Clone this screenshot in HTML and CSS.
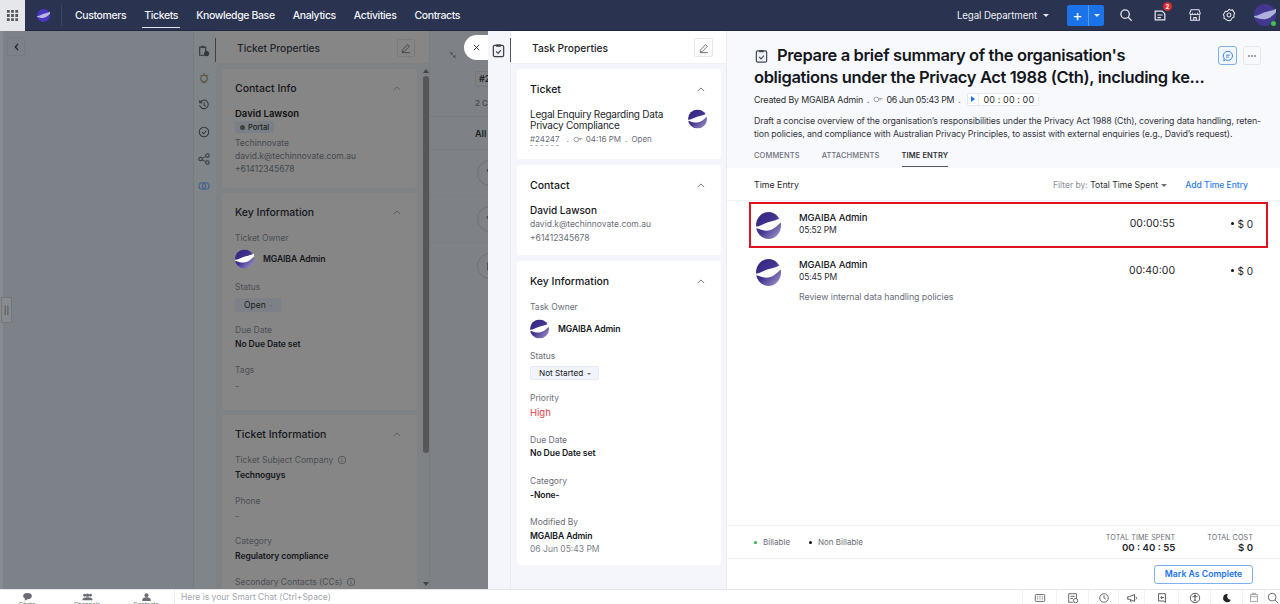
FILE: index.html
```html
<!DOCTYPE html>
<html lang="en">
<head>
<meta charset="utf-8">
<title>Task Properties</title>
<link rel="stylesheet" href="styles.css">
</head>
<body>
<svg class="defs" width="0" height="0" aria-hidden="true">
  <defs>
    <linearGradient id="lg" x1="0.1" y1="0" x2="0.95" y2="0.85">
      <stop offset="0" stop-color="#33257f"/>
      <stop offset=".5" stop-color="#41338e"/>
      <stop offset="1" stop-color="#9a8bc6"/>
    </linearGradient>
    <symbol id="logo" viewBox="0 0 24 24">
      <circle cx="12" cy="12" r="12" fill="url(#lg)"/>
      <path d="M-1 12.500C2 14 5 11.500 9 10C14 8 19 8 25 4.500L25 8C21 12 17 16 12 16.500C7 17 3 15 -1 14z" fill="#fff"/>
    </symbol>
    <symbol id="clip" viewBox="0 0 16 16">
      <rect x="2.500" y="2.500" width="11" height="12" rx="1.500" fill="#eef0f8" stroke="currentColor" stroke-width="1.300"/>
      <path d="M5.500 1.500h5v2.500h-5z" fill="currentColor"/>
      <path d="M5.500 9l2 2 3-3.500" fill="none" stroke="currentColor" stroke-width="1.200"/>
    </symbol>
    <symbol id="pen" viewBox="0 0 16 16">
      <path d="M3 11l7-7.500 2.500 2.300-7 7.200H3zM2.500 14.200h11" fill="none" stroke="currentColor" stroke-width="1"/>
    </symbol>
    <symbol id="chev" viewBox="0 0 10 6">
      <path d="M1 5l4-4 4 4" fill="none" stroke="currentColor" stroke-width="1"/>
    </symbol>
    <symbol id="info" viewBox="0 0 12 12">
      <circle cx="6" cy="6" r="4.500" fill="none" stroke="currentColor"/>
      <path d="M6 5.500v3M6 3.500v1" stroke="currentColor"/>
    </symbol>
    <symbol id="clock" viewBox="0 0 12 8">
      <circle cx="4" cy="4" r="2.800" fill="none" stroke="currentColor"/>
      <path d="M7 3h4.500M8.500 3v2" stroke="currentColor"/>
    </symbol>
  </defs>
</svg>

<div class="app">
  <header class="topbar">
    <button class="grid-btn" aria-label="Apps">
      <svg class="ic16" viewBox="0 0 14 14"><path d="M1 1h3v3H1zM5.500 1h3v3h-3zM10 1h3v3h-3zM1 5.500h3v3H1zM5.500 5.500h3v3h-3zM10 5.500h3v3h-3zM1 10h3v3H1zM5.500 10h3v3h-3zM10 10h3v3h-3z" fill="#55585f"/></svg>
    </button>
    <div class="brand">
      <svg class="brand-logo" viewBox="0 0 24 24"><circle cx="12" cy="12" r="12" fill="#4a35c0"/><path d="M-1 12.500C2 14 5 11.500 9 10C14 8 19 8 25 4.500L25 8C21 12 17 16 12 16.500C7 17 3 15 -1 14z" fill="#b9b6e0"/></svg>
    </div>
    <nav class="nav">
      <a class="nav-item">Customers</a>
      <a class="nav-item nav-active">Tickets</a>
      <a class="nav-item">Knowledge Base</a>
      <a class="nav-item">Analytics</a>
      <a class="nav-item">Activities</a>
      <a class="nav-item">Contracts</a>
    </nav>
    <div class="top-right">
      <span class="dept">Legal Department</span>
      <span class="caret-w"></span>
      <div class="add-btn">
        <span class="add-plus">+</span>
        <span class="add-drop"><span class="caret-w"></span></span>
      </div>
      <svg class="top-ic ti-search" viewBox="0 0 16 16"><circle cx="7" cy="7" r="4.800" fill="none" stroke="#e8e8ee" stroke-width="1.500"/><path d="M10.500 10.500l4 4" stroke="#e8e8ee" stroke-width="1.500"/></svg>
      <span class="note-wrap">
        <svg class="top-ic" viewBox="0 0 16 16"><path d="M2.500 3.500h8l3 3v7h-11z" fill="none" stroke="#e8e8ee" stroke-width="1.400"/><path d="M5 8h6M5 11h4" stroke="#e8e8ee" stroke-width="1.200"/></svg>
        <span class="badge">2</span>
      </span>
      <svg class="top-ic ti-store" viewBox="0 0 16 16"><path d="M2 6l1.500-4h9L14 6c0 2-2.500 2-3 .5C10.500 8 9 8 8 6.500 7 8 5.500 8 5 6.500 4.500 8 2 8 2 6zM3 8.500V14h10V8.500M6.500 14v-3h3v3" fill="none" stroke="#e8e8ee" stroke-width="1.200"/></svg>
      <svg class="top-ic" viewBox="0 0 16 16"><path d="M8 1.500l2 1 2.200-.3 1 2 1.300 1.800-1 2 .3 2.200-2 1L10 14l-2 .6-2-.6-1.800-1.300-2-1 .3-2.200-1-2 1.300-1.800 1-2 2.200.3z" fill="none" stroke="#e8e8ee" stroke-width="1.200"/><circle cx="8" cy="8" r="2.200" fill="none" stroke="#e8e8ee" stroke-width="1.200"/></svg>
      <span class="avatar-wrap">
        <svg class="avatar" viewBox="0 0 24 24"><circle cx="12" cy="12" r="12" fill="#43388f"/><path d="M-1 12.500C2 14 5 11.500 9 10C14 8 19 8 25 4.500L25 8C21 12 17 16 12 16.500C7 17 3 15 -1 14z" fill="#aeb0dc"/></svg>
        <span class="online"></span>
      </span>
    </div>
  </header>

  <main class="main">
    <section class="dim">
      <div class="dim-rail"></div>
      <div class="dim-collapsed">
        <span class="back-btn"><svg viewBox="0 0 6 10" class="back-ic"><path d="M5 1L1.500 5 5 9" fill="none" stroke="#222" stroke-width="1.500"/></svg></span>
        <span class="handle">||</span>
      </div>

      <aside class="dim-side">
        <span class="ds-item ds-first"><svg class="ds-ic" viewBox="0 0 14 14"><path d="M2 2.500h7v9.500H2z" fill="none" stroke="#33373c" stroke-width="1.300"/><path d="M4 1h3v2H4z" fill="#33373c"/><circle cx="10" cy="10" r="3" fill="#33373c"/></svg></span>
        <span class="ds-item"><svg class="ds-ic" viewBox="0 0 14 14"><circle cx="7" cy="7.500" r="3.800" fill="none" stroke="#55523a" stroke-width="1.300"/><path d="M7 1v2M2 3l1.500 1.500M12 3l-1.500 1.500M5 12.500h4" stroke="#55523a"/></svg></span>
        <span class="ds-item"><svg class="ds-ic" viewBox="0 0 14 14"><path d="M2.500 4A5 5 0 1 1 2 7M2 1.500V4.500h3M7 4v3.300l2 1" fill="none" stroke="#33373c" stroke-width="1.200"/></svg></span>
        <span class="ds-item"><svg class="ds-ic" viewBox="0 0 14 14"><circle cx="7" cy="7" r="5.500" fill="none" stroke="#33373c" stroke-width="1.200"/><path d="M4.500 7l2 2 3-3.500" fill="none" stroke="#33373c" stroke-width="1.200"/></svg></span>
        <span class="ds-item"><svg class="ds-ic" viewBox="0 0 14 14"><circle cx="3" cy="7" r="2" fill="none" stroke="#33373c" stroke-width="1.200"/><circle cx="11" cy="3" r="2" fill="none" stroke="#33373c" stroke-width="1.200"/><circle cx="11" cy="11" r="2" fill="none" stroke="#33373c" stroke-width="1.200"/><path d="M5 6l4-2M5 8l4 2" stroke="#33373c"/></svg></span>
        <span class="ds-item"><svg class="ds-ic" viewBox="0 0 14 14"><circle cx="5" cy="7" r="3.800" fill="none" stroke="#45608f" stroke-width="1.400"/><circle cx="9" cy="7" r="3.800" fill="none" stroke="#45608f" stroke-width="1.400"/></svg></span>
      </aside>

      <div class="dim-panel">
        <div class="dp-head">
          <span class="dp-title">Ticket Properties</span>
          <span class="dp-edit"><svg class="ic12" viewBox="0 0 16 16"><use href="#pen"/></svg></span>
        </div>
        <div class="dp-body">
          <div class="dp-cards">
            <div class="dcard dcard-contact">
              <div class="card-head"><span class="card-title">Contact Info</span><svg class="chev" viewBox="0 0 10 6"><use href="#chev"/></svg></div>
              <div class="d-name">David Lawson</div>
              <span class="portal"><span class="portal-dot"></span>Portal</span>
              <div class="d-line">Techinnovate</div>
              <div class="d-line">david.k@techinnovate.com.au</div>
              <div class="d-line">+61412345678</div>
            </div>
            <div class="dcard dcard-key">
              <div class="card-head"><span class="card-title">Key Information</span><svg class="chev" viewBox="0 0 10 6"><use href="#chev"/></svg></div>
              <div class="d-label d-label-first">Ticket Owner</div>
              <div class="owner d-owner"><svg class="logo-s" viewBox="0 0 24 24"><use href="#logo"/></svg><span class="d-strong">MGAIBA Admin</span></div>
              <div class="d-label d-status">Status</div>
              <span class="d-chip">Open <span class="mini-caret"></span></span>
              <div class="d-label d-due">Due Date</div>
              <div class="d-strong">No Due Date set</div>
              <div class="d-label d-tags">Tags</div>
              <div class="d-dash">-</div>
            </div>
            <div class="dcard dcard-info">
              <div class="card-head"><span class="card-title">Ticket Information</span><svg class="chev" viewBox="0 0 10 6"><use href="#chev"/></svg></div>
              <div class="d-label d-label-first">Ticket Subject Company <svg class="ic-info" viewBox="0 0 12 12"><use href="#info"/></svg></div>
              <div class="d-strong d-company">Technoguys</div>
              <div class="d-label d-gap2">Phone</div>
              <div class="d-dash d-dash-t">-</div>
              <div class="d-label d-gap2">Category</div>
              <div class="d-strong d-reg">Regulatory compliance</div>
              <div class="d-label d-gap2">Secondary Contacts (CCs) <svg class="ic-info" viewBox="0 0 12 12"><use href="#info"/></svg></div>
            </div>
          </div>
          <div class="d-scroll">
            <span class="arrow-up"></span>
            <span class="thumb"></span>
            <span class="arrow-down"></span>
          </div>
        </div>
      </div>

      <div class="dim-content">
        <svg class="collapse-ic" viewBox="0 0 10 10"><path d="M1 1l3 3M9 9L6 6M4 2v2H2M6 8V6h2" fill="none" stroke="#3b3e42"/></svg>
        <span class="dc-chip">#2</span>
        <div class="dc-count">2 C</div>
        <div class="dc-all">All</div>
        <div class="dc-row"><span class="dc-circle"><svg class="dc-ic" viewBox="0 0 10 10"><path d="M1 2h8L5 9z" fill="none" stroke="#33373c"/></svg></span></div>
        <div class="dc-row"><span class="dc-circle"><svg class="dc-ic" viewBox="0 0 10 10"><path d="M1 2h8L5 9z" fill="none" stroke="#33373c"/></svg></span></div>
        <div class="dc-row dc-row-last"><span class="dc-circle"><svg class="dc-ic" viewBox="0 0 10 10"><rect x="2" y="1" width="6" height="8" fill="none" stroke="#33373c"/></svg></span></div>
      </div>
      <button class="close-pill" aria-label="Close"><svg class="close-ic" viewBox="0 0 8 8"><path d="M1 1l6 6M7 1L1 7" stroke="#222" stroke-width="1"/></svg></button>
    </section>

    <aside class="strip">
      <span class="strip-item"><svg class="ic14" viewBox="0 0 16 16"><use href="#clip"/></svg></span>
    </aside>

    <section class="props">
      <div class="props-head">
        <span class="props-title">Task Properties</span>
        <span class="edit-btn"><svg class="ic12" viewBox="0 0 16 16"><use href="#pen"/></svg></span>
      </div>
      <div class="props-body">
        <div class="card card-ticket">
          <div class="pcard-head"><span class="card-title">Ticket</span><svg class="chev" viewBox="0 0 10 6"><use href="#chev"/></svg></div>
          <div class="ticket-row">
            <div class="ticket-text">
              <div class="ticket-name">Legal Enquiry Regarding Data<br>Privacy Compliance</div>
              <div class="ticket-meta"><span class="ticket-no">#24247</span><span class="sep">.</span><svg class="ic-clock" viewBox="0 0 12 8"><use href="#clock"/></svg><span>04:16 PM</span><span class="sep">.</span><span>Open</span></div>
            </div>
            <svg class="logo-m" viewBox="0 0 24 24"><use href="#logo"/></svg>
          </div>
        </div>
        <div class="card card-contact">
          <div class="pcard-head"><span class="card-title">Contact</span><svg class="chev" viewBox="0 0 10 6"><use href="#chev"/></svg></div>
          <div class="p-name">David Lawson</div>
          <div class="p-line">david.k@techinnovate.com.au</div>
          <div class="p-line">+61412345678</div>
        </div>
        <div class="card card-key">
          <div class="pcard-head"><span class="card-title">Key Information</span><svg class="chev" viewBox="0 0 10 6"><use href="#chev"/></svg></div>
          <div class="p-label p-first">Task Owner</div>
          <div class="owner p-owner"><svg class="logo-s" viewBox="0 0 24 24"><use href="#logo"/></svg><span class="p-strong">MGAIBA Admin</span></div>
          <div class="p-label p-status">Status</div>
          <span class="p-chip">Not Started <span class="mini-caret"></span></span>
          <div class="p-label p-priority">Priority</div>
          <div class="p-high">High</div>
          <div class="p-label p-due">Due Date</div>
          <div class="p-strong p-dueval">No Due Date set</div>
          <div class="p-label p-cat">Category</div>
          <div class="p-strong p-none">-None-</div>
          <div class="p-label p-mod">Modified By</div>
          <div class="p-strong">MGAIBA Admin</div>
          <div class="p-date">06 Jun 05:43 PM</div>
        </div>
      </div>
    </section>

    <section class="detail">
      <div class="detail-head">
        <div class="title-row">
          <h1 class="title"><svg class="title-ic" viewBox="0 0 16 16"><use href="#clip"/></svg>Prepare a brief summary of the organisation's<br>obligations under the Privacy Act 1988 (Cth), including ke...</h1>
          <div class="title-actions">
            <span class="chat-btn"><svg class="ic12" viewBox="0 0 14 14"><path d="M7 1.500a5.300 5.300 0 1 1-2.500 10L2 12.500l.6-2.500A5.300 5.300 0 0 1 7 1.500zM4.800 6h4.400M4.800 8.300h3" fill="none" stroke="#2b7be4" stroke-width="1.100"/></svg></span>
            <span class="more-btn"><span class="dot3"></span><span class="dot3"></span><span class="dot3"></span></span>
          </div>
        </div>
        <div class="meta">
          <span>Created By MGAIBA Admin</span><span class="sep">.</span>
          <svg class="ic-clock" viewBox="0 0 12 8"><use href="#clock"/></svg>
          <span class="meta-date">06 Jun 05:43 PM</span><span class="sep">.</span>
          <span class="timer"><span class="play-box"><span class="play"></span></span><span class="timer-val">00 : 00 : 00</span></span>
        </div>
        <p class="desc">Draft a concise overview of the organisation’s responsibilities under the Privacy Act 1988 (Cth), covering data handling, reten-<br>tion policies, and compliance with Australian Privacy Principles, to assist with external enquiries (e.g., David’s request).</p>
        <div class="tabs">
          <span class="tab">COMMENTS</span>
          <span class="tab">ATTACHMENTS</span>
          <span class="tab tab-active">TIME ENTRY</span>
        </div>
      </div>
      <div class="te-head">
        <span class="te-title">Time Entry</span>
        <span class="te-filter"><span class="te-filter-l">Filter by:</span> Total Time Spent <span class="mini-caret mini-caret-l"></span></span>
        <span class="te-add">Add Time Entry</span>
      </div>
      <div class="entries">
        <div class="entry entry-hl">
          <svg class="logo-l" viewBox="0 0 24 24" preserveAspectRatio="none"><use href="#logo"/></svg>
          <div class="entry-who"><div class="entry-name">MGAIBA Admin</div><div class="entry-time">05:52 PM</div></div>
          <span class="entry-dur">00:00:55</span>
          <span class="entry-cost"><span class="bullet"></span>$ 0</span>
        </div>
        <div class="entry entry-plain">
          <svg class="logo-l" viewBox="0 0 24 24" preserveAspectRatio="none"><use href="#logo"/></svg>
          <div class="entry-who"><div class="entry-name">MGAIBA Admin</div><div class="entry-time">05:45 PM</div></div>
          <span class="entry-dur">00:40:00</span>
          <span class="entry-cost"><span class="bullet"></span>$ 0</span>
        </div>
        <div class="entry-note">Review internal data handling policies</div>
      </div>
      <div class="totals">
        <span class="legend"><span class="lg-dot lg-green"></span>Billable</span>
        <span class="legend legend-2"><span class="lg-dot lg-black"></span>Non Billable</span>
        <div class="total total-time"><div class="total-l">TOTAL TIME SPENT</div><div class="total-v">00 : 40 : 55</div></div>
        <div class="total"><div class="total-l">TOTAL COST</div><div class="total-v">$ 0</div></div>
      </div>
      <div class="actions"><button class="complete">Mark As Complete</button></div>
    </section>
  </main>

  <footer class="chatbar">
    <span class="cb-tab cb-t1"><svg class="cb-ic" viewBox="0 0 14 11"><path d="M7 0c4 0 6 1.800 6 4.200S11 8.500 7 8.500L3 10.500l.5-3C2 6.800 1 5.600 1 4.200 1 1.800 3 0 7 0z" fill="#6a6d72"/></svg><span class="cb-tl">Chats</span></span>
    <span class="cb-tab cb-t2"><svg class="cb-ic" viewBox="0 0 14 11"><circle cx="3" cy="3" r="2" fill="#6a6d72"/><circle cx="11" cy="3" r="2" fill="#6a6d72"/><circle cx="7" cy="3" r="2.400" fill="#6a6d72"/><path d="M0 10c0-3 2-4 7-4s7 1 7 4z" fill="#6a6d72"/></svg><span class="cb-tl">Channels</span></span>
    <span class="cb-tab cb-t3"><svg class="cb-ic" viewBox="0 0 14 11"><circle cx="7" cy="3" r="2.800" fill="#6a6d72"/><path d="M1 11c0-4 2-5 6-5s6 1 6 5z" fill="#6a6d72"/></svg><span class="cb-tl">Contacts</span></span>
    <span class="cb-input">Here is your Smart Chat (Ctrl+Space)</span>
    <div class="cb-tools">
      <span class="cb-tool cb-w1"><svg class="cb-ti" viewBox="0 0 14 14"><rect x="1.500" y="3" width="11" height="8" rx="1" fill="none" stroke="#555"/><path d="M3.500 5.500h7M3.500 8h7" stroke="#555" stroke-dasharray="1 1"/></svg></span>
      <span class="cb-tool cb-w2"><svg class="cb-ti" viewBox="0 0 14 14"><path d="M2 2h9v6M2 2v10h5M4 5h5M4 7.500h3" fill="none" stroke="#555"/><circle cx="10" cy="10" r="2.500" fill="none" stroke="#555"/></svg></span>
      <span class="cb-tool cb-w3"><svg class="cb-ti" viewBox="0 0 14 14"><circle cx="7" cy="7" r="5" fill="none" stroke="#555"/><path d="M7 4v3.300l2 1" fill="none" stroke="#555"/></svg></span>
      <span class="cb-tool cb-w4"><svg class="cb-ti" viewBox="0 0 14 14"><path d="M2 5.500v3h2l6 2.500V3L4 5.500zM11.500 5.500c1 .7 1 2.300 0 3M5 9l1 3" fill="none" stroke="#444"/></svg></span>
      <span class="cb-tool cb-w5"><svg class="cb-ti" viewBox="0 0 14 14"><path d="M3 2h8v10l-2-1.500H3zM9.500 6.500H5.500M7 5L5.500 6.500 7 8" fill="none" stroke="#444"/></svg></span>
      <span class="cb-tool cb-w6"><svg class="cb-ti" viewBox="0 0 14 14"><circle cx="7" cy="7" r="5.500" fill="none" stroke="#444"/><circle cx="7" cy="4" r="1" fill="#444"/><path d="M4 5.500h6M7 5.500v3M5.500 11L7 8.500 8.500 11" fill="none" stroke="#444"/></svg></span>
      <span class="cb-tool cb-w7"><svg class="cb-ti" viewBox="0 0 14 14"><path d="M8 2.500A4.700 4.700 0 1 0 11.500 9 4 4 0 0 1 8 2.500z" fill="#222"/></svg></span>
      <span class="cb-tool cb-w8"><svg class="cb-ti" viewBox="0 0 14 14"><path d="M3 3h8v8H3zM3 5.500h8M5 3V1.500h4V3" fill="none" stroke="#999"/></svg></span>
      <span class="cb-tool cb-w9"><svg class="cb-ti" viewBox="0 0 14 14"><circle cx="6" cy="6" r="4.500" fill="none" stroke="#555"/><path d="M9.500 9.500l3.500 3.500" stroke="#555"/></svg></span>
    </div>
  </footer>
</div>
</body>
</html>
```

FILE: styles.css
```css
* { box-sizing: border-box; }
html, body { margin: 0; padding: 0; }
body { width: 1280px; height: 604px; overflow: hidden; font-family: Inter, "Liberation Sans", sans-serif; background: #fff; color: #15171c; }
.defs { position: absolute; }
.app { width: 1280px; height: 604px; display: flex; flex-direction: column; overflow: hidden; }
svg { display: block; flex: none; }
button { font-family: inherit; }

/* top bar */
.topbar { height: 31px; flex: none; display: flex; align-items: center; background: #2a3350; border-bottom: 1px solid #20283f; }
.grid-btn { width: 25px; height: 31px; padding: 0; border: 0; background: #e6e7ea; display: flex; align-items: center; justify-content: center; }
.ic16 { width: 13px; height: 13px; }
.brand { width: 37px; height: 22px; display: flex; align-items: center; padding-left: 12px; border-right: 1px solid #3d4661; }
.brand-logo { width: 13px; height: 13px; }
.nav { display: flex; margin-left: 13px; height: 31px; gap: 18px; }
.nav-item { font-size: 10.5px; font-weight: 500; color: #f0f2f7; line-height: 31px; position: relative; letter-spacing: -.38px; }
.nav-active::after { content: ""; position: absolute; left: -2px; right: -2px; bottom: 3px; height: 1px; background: #dfe3ea; }
.top-right { margin-left: auto; display: flex; align-items: center; height: 31px; }
.dept { font-size: 9.7px; color: #eef0f5; letter-spacing: -.1px; }
.caret-w { display: inline-block; width: 0; height: 0; border: 3px solid transparent; border-top: 3px solid #e8ebf2; border-bottom: 0; }
.dept + .caret-w { margin-left: 6px; }
.add-btn { width: 37px; height: 21px; margin-left: 18px; border-radius: 2px; background: #1a73e8; display: flex; align-items: center; }
.add-plus { width: 22px; text-align: center; color: #fff; font-size: 15px; line-height: 21px; border-right: 1px solid #5a9bf0; height: 21px; }
.add-drop { flex: 1; display: flex; justify-content: center; align-items: center; }
.top-ic { width: 14px; height: 14px; margin-left: 20px; }
.ti-search { margin-left: 15px; }
.ti-store { margin-left: 21px; }
.note-wrap { position: relative; display: block; }
.badge { position: absolute; top: -6px; right: -5px; width: 9px; height: 9px; border-radius: 50%; background: #dc2b2f; color: #fff; font-size: 6px; line-height: 9px; text-align: center; font-weight: 700; }
.avatar-wrap { position: relative; display: block; margin: 0 4px 0 18px; }
.avatar { width: 22px; height: 22px; }
.online { position: absolute; right: 0; bottom: 0; width: 5px; height: 5px; border-radius: 50%; background: #3fbf4b; }

/* main */
.main { flex: 1; min-height: 0; display: flex; }

/* dimmed page behind panel */
.dim { width: 488px; flex: none; display: flex; background: #7f8488; position: relative; overflow: hidden; }
.dim-rail { width: 3px; background: #888b8f; flex: none; }
.dim-collapsed { width: 190px; flex: none; position: relative; padding: 6px 0 0 4px; background: #7c8287; }
.back-btn { display: flex; width: 18px; height: 19px; border: 1px solid #777c80; border-radius: 2px; align-items: center; justify-content: center; }
.back-ic { width: 5px; height: 8px; }
.handle { position: absolute; left: -2px; top: 266px; width: 11px; height: 26px; background: #888c90; border: 1px solid #73777b; font-size: 8px; line-height: 24px; text-align: center; color: #33363a; }
.dim-side { width: 23px; flex: none; background: #80858a; border-left: 1px solid #777b80; display: flex; flex-direction: column; position: relative; padding-top: 6px; }
.ds-item { height: 27px; display: flex; align-items: center; justify-content: center; padding-right: 2px; }
.ds-first::after { content: ""; position: absolute; right: 0; top: 7px; width: 1px; height: 24px; background: #3e4246; }
.ds-ic { width: 12px; height: 12px; }
.dim-panel { width: 214px; flex: none; background: #7f8285; display: flex; flex-direction: column; overflow: hidden; border-right: 1px solid #777b7f; }
.dp-head { height: 33px; flex: none; display: flex; align-items: center; justify-content: space-between; padding: 1px 14px 0 21px; background: #868686; border-bottom: 1px solid #7e8183; }
.dp-title { font-size: 10.2px; font-weight: 500; color: #23252a; }
.dp-edit { width: 18px; height: 18px; border: 1px solid #797b7e; border-radius: 2px; color: #33363a; display: flex; align-items: center; justify-content: center; }
.ic12 { width: 12px; height: 12px; }
.ic14 { width: 15px; height: 15px; }
.dp-body { flex: 1; min-height: 0; display: flex; padding: 5px 0 0 6px; }
.dp-cards { width: 195px; flex: none; display: flex; flex-direction: column; gap: 5px; }
.dcard { background: #868686; border-radius: 3px; padding: 0 13px; flex: none; }
.dcard-contact { height: 119px; }
.dcard-key { height: 217px; }
.dcard-info { height: 200px; }
.card-head { height: 38px; display: flex; align-items: center; justify-content: space-between; padding-right: 3px; }
.card-title { font-size: 10.5px; font-weight: 500; color: #15171c; }
.chev { width: 8px; height: 5px; color: #505358; }
.d-name { font-size: 9.5px; font-weight: 600; color: #111; line-height: 13px; }
.portal { display: flex; width: fit-content; align-items: center; gap: 3px; height: 12px; padding: 0 5px; margin-top: 1px; background: #7b8087; border-radius: 2px; font-size: 7.5px; font-weight: 500; color: #1a1c20; }
.portal-dot { width: 5px; height: 5px; border-radius: 50%; background: #3e4246; }
.d-line { font-size: 8.5px; color: #45484d; line-height: 13px; }
.portal + .d-line { margin-top: 4px; }
.d-label { font-size: 8.5px; color: #4b4f55; line-height: 13px; }
.d-label-first { margin-top: 1px; }
.owner { display: flex; align-items: center; gap: 9px; height: 21px; }
.d-owner { margin-top: 3px; }
.logo-s { width: 19px; height: 20px; }
.d-strong { font-size: 8.6px; font-weight: 600; color: #15171c; line-height: 14px; letter-spacing: -.1px; }
.d-status { margin-top: 12px; }
.d-chip { display: block; width: fit-content; height: 14px; padding: 0 8px 0 9px; margin-top: 4px; background: #7d8187; border-radius: 2px; font-size: 8.5px; line-height: 14px; color: #1a1c20; }
.mini-caret { display: inline-block; width: 0; height: 0; border: 2px solid transparent; border-top: 2px solid #6b6e74; border-bottom: 0; vertical-align: middle; margin-left: 1px; }
.mini-caret-l { border-width: 3px; border-top-width: 3px; margin-left: 1px; }
.d-due { margin-top: 12px; }
.d-tags { margin-top: 13px; }
.d-dash { font-size: 9px; color: #4b4f55; line-height: 13px; margin-top: 2px; }
.d-dash-t { margin-top: 1px; }
.d-company { margin-top: 1px; }
.d-reg { margin-top: 1px; }
.d-gap2 { margin-top: 13px; }
.ic-info { display: inline-block; width: 10px; height: 10px; color: #4b4f55; vertical-align: -2px; margin-left: 1px; }
.d-scroll { width: 7px; margin-left: 5px; flex: none; position: relative; display: flex; flex-direction: column; align-items: center; }
.arrow-up { width: 0; height: 0; border: 3px solid transparent; border-bottom: 4px solid #444; border-top: 0; }
.thumb { width: 6px; height: 377px; border-radius: 3px; background: #565656; margin-top: 3px; }
.arrow-down { width: 0; height: 0; border: 3px solid transparent; border-top: 4px solid #444; border-bottom: 0; margin-top: auto; margin-bottom: 3px; }
.dim-content { flex: 1; background: #7e8286; position: relative; padding-top: 20px; overflow: hidden; }
.collapse-ic { width: 8px; height: 8px; margin-left: 19px; }
.dc-chip { display: block; width: 60px; height: 16px; margin: 12px 0 0 45px; border: 1px solid #74777b; border-radius: 2px 0 0 2px; font-size: 9px; font-weight: 600; line-height: 14px; padding-left: 3px; color: #222; }
.dc-count { font-size: 8px; font-weight: 500; color: #43464a; margin-top: 11px; line-height: 10px; padding: 0 0 8px 45px; border-bottom: 1px solid #777b7f; }
.dc-all { font-size: 9px; font-weight: 600; color: #1d1f23; height: 33px; line-height: 33px; padding-left: 45px; border-bottom: 1px solid #777b7f; }
.dc-row { height: 46.5px; display: flex; align-items: center; padding-left: 47px; border-bottom: 1px solid #7a7e82; }
.dc-row-last { border-bottom: 0; }
.dc-circle { width: 26px; height: 26px; border-radius: 50%; border: 1px solid #6d7074; display: flex; align-items: center; justify-content: center; flex: none; }
.dc-ic { width: 9px; height: 9px; }
.close-pill { position: absolute; right: 0; top: 4px; width: 24px; height: 25px; border: 0; padding: 0; background: #fff; border-radius: 13px 0 0 13px; display: flex; align-items: center; justify-content: center; }
.close-ic { width: 7px; height: 7px; }

/* strip */
.strip { width: 23px; flex: none; background: #f4f6fb; border-right: 1px solid #e8ebf1; padding-top: 7px; position: relative; }
.strip-item { display: flex; height: 24px; align-items: center; justify-content: center; color: #3c3f45; border-right: 1px solid #50535a; margin-right: -1px; padding-right: 2px; }

/* properties */
.props { width: 216px; flex: none; background: #f4f6fb; border-right: 1px solid #e8ebf1; display: flex; flex-direction: column; }
.props-head { height: 33px; flex: none; background: #fff; border-bottom: 1px solid #eff1f6; display: flex; align-items: center; justify-content: space-between; padding: 1px 13px 0 21px; }
.props-title { font-size: 10.2px; font-weight: 500; color: #23252a; }
.edit-btn { width: 19px; height: 19px; border: 1px solid #e5e8ee; border-radius: 2px; color: #44474d; display: flex; align-items: center; justify-content: center; }
.props-body { flex: 1; display: flex; flex-direction: column; gap: 6px; padding: 5px 5px 0 6px; }
.card { background: #fff; border-radius: 3px; padding: 0 13px; flex: none; }
.card-ticket { height: 90px; }
.card-contact { height: 90px; }
.card-key { height: 304px; }
.pcard-head { height: 38px; display: flex; align-items: center; justify-content: space-between; padding: 2px 3px 0 0; }
.ticket-row { display: flex; align-items: flex-start; justify-content: space-between; }
.ticket-name { font-size: 10px; line-height: 11px; color: #24262b; margin-top: 2px; letter-spacing: -.24px; }
.ticket-meta { display: flex; align-items: center; gap: 3px; font-size: 8px; color: #6a6e78; margin-top: 2px; line-height: 13px; }
.ticket-no { border-bottom: 1px dashed #b6bac4; line-height: 11px; margin-right: 3px; }
.ticket-meta .sep + span { margin-right: 3px; }
.sep { color: #666a72; padding: 0 1px; }
.ic-clock { width: 10px; height: 7px; color: #8c9099; }
.logo-m { width: 19px; height: 20px; margin: 2px 1px 0 0; }
.p-name { font-size: 10px; font-weight: 500; color: #15171c; line-height: 14px; }
.p-line { font-size: 8.5px; color: #6a6e78; line-height: 14px; }
.p-label { font-size: 8.5px; color: #6a6e78; line-height: 13px; }
.p-first { margin-top: 2px; }
.p-owner { margin-top: 4px; }
.p-strong { font-size: 8.6px; font-weight: 600; color: #15171c; line-height: 14px; letter-spacing: -.1px; }
.p-status { margin-top: 11px; }
.p-chip { display: block; width: fit-content; height: 14px; padding: 0 7px 0 8px; margin-top: 3px; background: #f1f4fa; border: 1px solid #e6eaf2; border-radius: 2px; font-size: 8.2px; line-height: 12px; color: #15171c; }
.p-priority { margin-top: 12px; }
.p-high { font-size: 9.5px; color: #e6414a; font-weight: 400; line-height: 14px; margin-top: 1px; }
.p-due { margin-top: 14px; }
.p-dueval { margin-top: -1px; }
.p-cat { margin-top: 15px; }
.p-mod { margin-top: 14px; }
.p-date { font-size: 8.5px; color: #7d818b; line-height: 13px; }

/* detail */
.detail { flex: 1; min-width: 0; display: flex; flex-direction: column; background: #fff; }
.detail-head { height: 137px; flex: none; background: #f8f9fc; padding: 14px 0 0 27px; }
.title-row { display: flex; }
.title { width: 464px; flex: none; margin: 0; font-size: 16.5px; line-height: 21.5px; font-weight: 600; color: #15171c; letter-spacing: -.37px; white-space: nowrap; }
.title-ic { display: inline-block; width: 15px; height: 16px; margin-right: 8px; vertical-align: -3px; color: #454a52; }
.title-actions { display: flex; gap: 6px; margin-top: 1px; }
.chat-btn { width: 19px; height: 19px; border: 1px solid #7cb1f0; border-radius: 3px; display: flex; align-items: center; justify-content: center; background: #f2f7fe; }
.more-btn { width: 18px; height: 19px; border: 1px solid #e3e6ed; border-radius: 3px; display: flex; align-items: center; justify-content: center; gap: 1px; }
.dot3 { width: 2px; height: 2px; border-radius: 50%; background: #84878e; }
.meta { display: flex; align-items: center; gap: 3px; margin-top: 4px; height: 14px; font-size: 8.8px; color: #2a2c31; letter-spacing: -.14px; }
.meta-date { letter-spacing: -.28px; }
.timer { display: flex; align-items: center; height: 13px; border: 1px solid #e4e7ee; border-radius: 2px; background: #fff; margin-left: 2px; }
.play-box { width: 11px; height: 11px; display: flex; align-items: center; justify-content: center; border-right: 1px solid #e4e7ee; }
.play { width: 0; height: 0; border-left: 4px solid #1a73e8; border-top: 3px solid transparent; border-bottom: 3px solid transparent; }
.timer-val { padding: 0 4px 0 5px; font-size: 9px; letter-spacing: .1px; }
.desc { margin: 8px 0 0; font-size: 8.8px; line-height: 13px; color: #33363c; letter-spacing: -.12px; white-space: nowrap; }
.tabs { display: flex; gap: 22px; margin-top: 6px; }
.tab { font-size: 7.5px; line-height: 13px; height: 21px; padding-top: 3px; color: #6d7079; letter-spacing: .1px; font-weight: 500; }
.tab-active { color: #2c2e33; border-bottom: 1px solid #55585f; font-weight: 600; }
.te-head { height: 33px; flex: none; display: flex; align-items: center; padding: 1px 32px 0 27px; border-bottom: 1px solid #f1f2f6; font-size: 8.8px; }
.te-title { color: #23252a; }
.te-filter { margin-left: auto; color: #2a2c31; font-size: 8.5px; }
.te-filter-l { color: #8a8e98; }
.te-add { color: #2b7be4; margin-left: 18px; font-weight: 500; font-size: 8.6px; letter-spacing: -.05px; }
.entries { flex: 1; min-height: 0; padding: 1px 12px 0 22px; }
.entry { display: flex; align-items: center; }
.entry-hl { height: 46px; border: 2px solid #e0141f; padding: 0 13px 0 5px; }
.entry-plain { height: 46px; padding: 2px 15px 0 7px; }
.logo-l { width: 25px; height: 27px; }
.entry-who { margin-left: 18px; padding-bottom: 3px; }
.entry-name { font-size: 9.5px; line-height: 13px; font-weight: 500; color: #15171c; letter-spacing: -.1px; }
.entry-time { font-size: 8.5px; line-height: 13px; color: #2a2c31; letter-spacing: -.15px; }
.entry-dur { margin: 0 0 3px auto; font-size: 10.5px; color: #23252a; }
.entry-cost { width: 78px; margin-bottom: 3px; display: flex; align-items: center; justify-content: flex-end; font-size: 10px; color: #23252a; }
.bullet { width: 3px; height: 3px; border-radius: 50%; background: #111; margin-right: 3px; }
.entry-note { font-size: 8.8px; color: #6a6e78; padding-left: 50px; line-height: 13px; margin-top: -4px; letter-spacing: -.05px; }
.totals { height: 34px; flex: none; display: flex; align-items: center; padding: 0 27px; border-top: 1px solid #f1f2f6; border-bottom: 1px solid #f1f2f6; }
.legend { display: flex; align-items: center; font-size: 8px; color: #6a6e78; }
.legend-2 { margin-left: 19px; }
.lg-dot { width: 3px; height: 3px; border-radius: 50%; margin-right: 6px; }
.lg-green { background: #2bb24c; }
.lg-black { background: #111; }
.total { text-align: right; margin-left: 32px; padding-top: 1px; }
.total-time { margin-left: auto; }
.total-l { font-size: 7.2px; line-height: 10px; color: #6a6e78; letter-spacing: .1px; }
.total-v { font-size: 9.6px; line-height: 10px; font-weight: 600; color: #23252a; }
.actions { height: 30px; flex: none; display: flex; align-items: center; justify-content: flex-end; padding-right: 27px; }
.complete { width: 99px; height: 19px; padding: 0; background: #fff; border: 1px solid #7cb1f0; border-radius: 3px; color: #1a73e8; font-size: 8.7px; font-weight: 600; }

/* chat bar */
.chatbar { height: 15px; flex: none; display: flex; align-items: flex-start; background: #fff; border-top: 1px solid #e6e7ea; overflow: hidden; }
.cb-tab { display: flex; flex-direction: column; align-items: center; width: 40px; }
.cb-t1 { margin-left: 7px; }
.cb-t2 { margin-left: 20px; }
.cb-t3 { margin-left: 19px; }
.cb-ic { width: 11px; height: 8px; margin-top: 3px; }
.cb-tl { font-size: 6px; line-height: 7px; color: #6a6d72; white-space: nowrap; }
.cb-input { margin-left: 8px; height: 15px; padding-left: 6px; border-left: 1px solid #ececf0; font-size: 8.5px; line-height: 15px; color: #a3a6ad; }
.cb-tools { margin-left: auto; display: flex; }
.cb-tool { height: 15px; display: flex; align-items: center; justify-content: center; border-left: 1px solid #f2f2f4; }
.cb-ti { width: 12px; height: 12px; }
.cb-w1 { width: 34px; }
.cb-w2 { width: 32px; }
.cb-w3 { width: 30px; }
.cb-w4 { width: 26px; }
.cb-w5 { width: 34px; }
.cb-w6 { width: 32px; }
.cb-w7 { width: 32px; }
.cb-w8 { width: 22px; }
.cb-w9 { width: 16px; }
```
